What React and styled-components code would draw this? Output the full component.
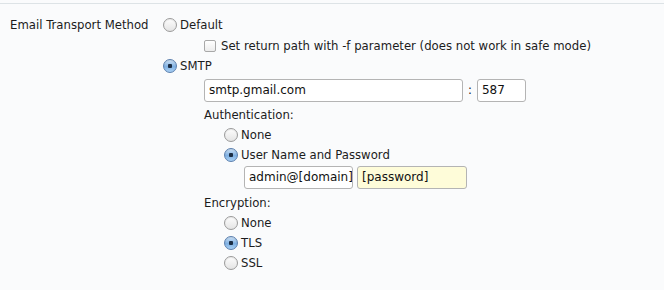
import React from 'react';
import styled, { createGlobalStyle } from 'styled-components';

const Global = createGlobalStyle`
  html, body { margin: 0; padding: 0; background: #fafbfc; }
  body { font-family: "DejaVu Sans", Verdana, sans-serif; font-size: 11.7px; color: #1c1c1c; }
`;

const Page = styled.div`
  width: 664px;
  height: 290px;
  border-top: 1px solid #dde3e6;
  margin-top: 3px;
  box-sizing: border-box;
  background: #fafbfc;
`;

const Row = styled.div`
  display: grid;
  grid-template-columns: 153px 1fr;
  padding: 11px 0 0 10px;
`;

const Label = styled.div`
  line-height: 20px;
`;

const Options = styled.div`
  display: flex;
  flex-direction: column;
`;

const Line = styled.label`
  display: flex;
  align-items: center;
  gap: 3px;
  height: ${(p) => p.h || 20}px;
  padding-left: ${(p) => p.indent || 0}px;
`;

const Text = styled.span`
  line-height: 20px;
`;

const RadioDot = styled.span`
  width: 14px;
  height: 14px;
  border-radius: 50%;
  box-sizing: border-box;
  border: 1px solid ${(p) => (p.checked ? '#5a7fae' : '#9a9a9a')};
  background: ${(p) =>
    p.checked
      ? 'radial-gradient(circle at 50% 50%, #1b2d44 0 2px, transparent 2.5px), linear-gradient(#cfe3f7, #7fb0e2 55%, #a9d0f4)'
      : 'linear-gradient(#fdfdfd, #e4e4e4)'};
  box-shadow: inset 0 1px 1px rgba(0,0,0,0.08);
  flex: none;
`;

const Check = styled.span`
  width: 12px;
  height: 12px;
  border-radius: 2px;
  box-sizing: border-box;
  border: 1px solid #a8a8a8;
  background: linear-gradient(#fff, #ececec);
  margin-right: 2px;
  flex: none;
`;

const Block = styled.div`
  display: flex;
  flex-direction: column;
  padding-left: ${(p) => p.indent || 0}px;
`;

const FieldRow = styled.div`
  display: flex;
  align-items: center;
  gap: ${(p) => p.gap || 5}px;
  padding-left: ${(p) => p.indent || 0}px;
  margin: ${(p) => p.margin || '0'};
`;

const Input = styled.div`
  width: ${(p) => p.w}px;
  height: 23px;
  box-sizing: border-box;
  border: 1px solid #b4b4b4;
  border-radius: 3px;
  background: ${(p) => (p.yellow ? '#fefcd9' : '#fff')};
  padding: 0 4px;
  line-height: 21px;
  font-size: 12px;
  color: #111;
  white-space: nowrap;
  overflow: hidden;
`;

const Heading = styled.div`
  line-height: 20px;
  margin-top: ${(p) => p.top || 0}px;
`;

const Radio = ({ checked, children, indent, h }) => (
  <Line indent={indent} h={h}>
    <RadioDot checked={checked} />
    <Text>{children}</Text>
  </Line>
);

export default function App() {
  return (
    <>
      <Global />
      <Page>
        <Row>
          <Label>Email Transport Method</Label>
          <Options>
            <Radio h={20.5}>Default</Radio>
            <Line indent={41} h={20.5}>
              <Check />
              <Text>Set return path with -f parameter (does not work in safe mode)</Text>
            </Line>
            <Radio checked h={20.5}>SMTP</Radio>
            <Block indent={41}>
              <FieldRow gap={5} margin="2px 0 0">
                <Input w={259}>smtp.gmail.com</Input>
                <Text>:</Text>
                <Input w={49}>587</Input>
              </FieldRow>
              <Heading top={3}>Authentication:</Heading>
              <Block indent={20}>
                <Radio>None</Radio>
                <Radio checked>User Name and Password</Radio>
                <FieldRow indent={20} gap={4} margin="1px 0 0">
                  <Input w={109}>admin@[domain]</Input>
                  <Input w={110} yellow>[password]</Input>
                </FieldRow>
              </Block>
              <Heading top={4}>Encryption:</Heading>
              <Block indent={20}>
                <Radio>None</Radio>
                <Radio checked>TLS</Radio>
                <Radio>SSL</Radio>
              </Block>
            </Block>
          </Options>
        </Row>
      </Page>
    </>
  );
}
